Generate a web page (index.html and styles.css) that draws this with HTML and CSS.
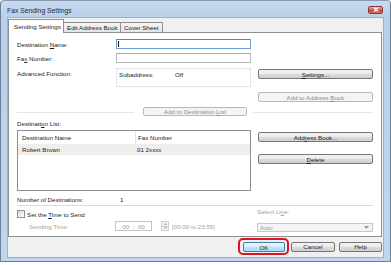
FILE: index.html
```html
<!DOCTYPE html>
<html lang="en">
<head>
    <meta charset="UTF-8">
    <title>Fax Sending Settings</title>
    <link rel="stylesheet" href="styles.css">
</head>
<body>
    <div class="window">
        <div class="titlebar">
            <span class="title">Fax Sending Settings</span>
            <span class="close-btn">
                <svg width="6" height="5" viewBox="0 0 6 5"><path d="M1 0.5 L5 4.5 M5 0.5 L1 4.5" stroke="#fff" stroke-width="1.3"/></svg>
            </span>
        </div>

        <div class="client">
            <div class="tabs">
                <div class="tab active">Sending Settings</div>
                <div class="tab">Edit Address Book</div>
                <div class="tab">Cover Sheet</div>
            </div>

            <div class="panel">
                <div class="row first">
                    <span class="label">Destination <u>N</u>ame:</span>
                    <div class="field focused"><span class="caret"></span></div>
                </div>
                <div class="row">
                    <span class="label">Fa<u>x</u> Number:</span>
                    <div class="field"></div>
                </div>
                <div class="row advanced">
                    <span class="label">Advanced Function:</span>
                    <div class="field info-box">
                        <span class="info-key">Subaddress:</span>
                        <span>Off</span>
                    </div>
                    <button class="btn side settings-btn"><span><u>S</u>ettings...</span></button>
                </div>
                <div class="row right-only">
                    <button class="btn side" disabled><span>Add to Address <u>B</u>ook</span></button>
                </div>
                <div class="row sep-row">
                    <span class="sep short"></span>
                    <button class="btn add-dest" disabled><span>Add to Destination <u>L</u>ist</span></button>
                    <span class="sep"></span>
                </div>

                <div class="dest-section">
                    <div class="dest-left">
                        <span class="label line">Destinati<u>o</u>n List:</span>
                        <div class="list">
                            <div class="list-head">
                                <span class="col-name">Destination Name</span>
                                <span class="col-fax">Fax Number</span>
                            </div>
                            <div class="list-row">
                                <span class="col-name">Robert Brown</span>
                                <span class="col-fax">01 2xxxx</span>
                            </div>
                        </div>
                    </div>
                    <div class="dest-right">
                        <button class="btn side"><span>Add<u>r</u>ess Book...</span></button>
                        <button class="btn side delete-btn"><span><u>D</u>elete</span></button>
                    </div>
                </div>

                <div class="row count-row">
                    <span class="label count-label">Number of Destinations:</span>
                    <span>1</span>
                </div>
                <div class="hr"></div>

                <div class="time-section">
                    <div class="time-left">
                        <div class="check-row">
                            <span class="checkbox"></span>
                            <span>Set the <u>T</u>ime to Send</span>
                        </div>
                        <div class="send-row">
                            <span class="muted send-label">Sending Time:</span>
                            <div class="time-box">00&nbsp;&nbsp;:&nbsp;&nbsp;00</div>
                            <div class="spin">
                                <span class="spin-btn"><svg width="3" height="2" viewBox="0 0 3 2"><path d="M0 2 L1.5 0 L3 2Z" fill="#b0b0b0"/></svg></span>
                                <span class="spin-btn"><svg width="3" height="2" viewBox="0 0 3 2"><path d="M0 0 L1.5 2 L3 0Z" fill="#b0b0b0"/></svg></span>
                            </div>
                            <span class="muted range">[00:00 to 23:59]</span>
                        </div>
                    </div>
                    <div class="time-right">
                        <span class="muted line">Select Li<u>n</u>e:</span>
                        <div class="select">
                            <span>Auto</span>
                            <svg width="5" height="3" viewBox="0 0 5 3"><path d="M0 0 L2.5 3 L5 0Z" fill="#9a9a9a"/></svg>
                        </div>
                    </div>
                </div>
            </div>

            <div class="dialog-buttons">
                <div class="ok-ring">
                    <button class="btn dlg ok">OK</button>
                </div>
                <button class="btn dlg cancel">Cancel</button>
                <button class="btn dlg help">Help</button>
            </div>
        </div>
    </div>
</body>
</html>
```

FILE: styles.css
```css
:root {
    --frame-blue: #bcd3ec;
    --client-gray: #f0f0f0;
    --tab-border: #8d9094;
    --field-border: #b5b8bd;
    --muted: #a3a3a3;
}

* {
    margin: 0;
    padding: 0;
    box-sizing: border-box;
}

body {
    width: 391px;
    height: 265px;
    overflow: hidden;
    background: #ffffff;
    font-family: "Liberation Sans", Arial, sans-serif;
    font-size: 6.2px;
    color: #1b1b1b;
}

u {
    text-decoration: underline;
    text-underline-offset: 1px;
}

/* window frame */
.window {
    width: 391px;
    height: 262px;
    border: 1px solid #6f7f94;
    border-top-color: #8a9ab0;
    border-radius: 4px 4px 0 0;
    background: linear-gradient(#c7daf0, #b9d0ea 17px, #c0d6ee);
    padding: 0 6px 3px 6px;
    display: flex;
    flex-direction: column;
}

.titlebar {
    height: 16px;
    display: flex;
    align-items: center;
    justify-content: space-between;
}

.title {
    font-size: 6.8px;
    color: #1e2a36;
    padding-top: 2px;
}

.close-btn {
    width: 15px;
    height: 8px;
    margin-right: 1px;
    margin-top: 1px;
    border: 1px solid #8a3a3a;
    border-radius: 2px;
    background: linear-gradient(#e9a99c, #d1624f 50%, #c4432f 51%, #d8735c);
    display: flex;
    align-items: center;
    justify-content: center;
}

.client {
    flex: 1;
    background: var(--client-gray);
    border: 1px solid #9cb0c7;
    display: flex;
    flex-direction: column;
}

/* tabs */
.tabs {
    display: flex;
    align-items: flex-end;
    height: 14px;
    padding-top: 1px;
}

.tab {
    height: 10px;
    padding: 0 3px;
    border: 1px solid var(--tab-border);
    border-bottom: none;
    border-left: none;
    background: linear-gradient(#f4f4f4, #e4e4e4);
    display: flex;
    align-items: center;
    white-space: nowrap;
}

.tab.active {
    height: 14px;
    width: 56px;
    padding-left: 5px;
    margin-bottom: -1px;
    border-left: 1px solid var(--tab-border);
    background: #ffffff;
    position: relative;
    z-index: 1;
}

.tabs .tab:nth-child(2) {
    width: 57px;
}

.tabs .tab:nth-child(3) {
    width: 42px;
}

.panel {
    height: 205px;
    margin-right: 1px;
    background: #ffffff;
    border: 1px solid var(--tab-border);
    padding: 0 8px;
}

/* rows */
.row {
    display: flex;
    align-items: center;
    height: 10px;
    margin-top: 4px;
}

.row.first {
    margin-top: 6px;
}

.label {
    width: 99px;
    flex-shrink: 0;
}

.field {
    width: 135px;
    height: 10px;
    border: 1px solid var(--field-border);
    border-top-color: #a6a9ae;
    background: #ffffff;
}

.field.focused {
    border-color: #6a9fd0;
    border-top-color: #4f86bb;
    display: flex;
    align-items: center;
    padding-left: 1px;
}

.caret {
    width: 1px;
    height: 6px;
    background: #222;
}

.row.advanced {
    height: 19px;
    margin-top: 5px;
    align-items: flex-start;
}

.row.advanced .label {
    padding-top: 2px;
}

.info-box {
    height: 19px;
    display: flex;
    padding: 2px 0 0 2px;
    border-color: #e1e3e6;
}

.info-key {
    width: 56px;
}

.btn {
    font-family: inherit;
    font-size: 6.2px;
    color: #1b1b1b;
    height: 10px;
    border: 1px solid #767676;
    border-radius: 2px;
    background: linear-gradient(#f3f3f3, #ebebeb 45%, #dcdcdc 50%, #cfcfcf);
    display: flex;
    align-items: center;
    justify-content: center;
    white-space: nowrap;
}

.btn:disabled {
    color: #8c8c8c;
    border-color: #b6b9bc;
    background: #f4f4f4;
}

.btn.side {
    width: 115px;
    flex-shrink: 0;
}

.settings-btn {
    margin-left: 7px;
    margin-top: 1px;
}

.row.right-only {
    margin-top: 5px;
    justify-content: flex-end;
}

.row.sep-row {
    height: 9px;
    margin-top: 5px;
}

.sep {
    flex: 1;
    height: 1px;
    background: #a0a0a0;
    border-bottom: 1px solid #ffffff;
    box-shadow: 0 1px 0 #e6e6e6;
}

.sep.short {
    flex: none;
    width: 117px;
}

.add-dest {
    width: 104px;
    height: 9px;
    margin: 0 6px 0 9px;
}

/* destination list */
.dest-section {
    display: flex;
    margin-top: 4px;
}

.dest-left {
    width: 234px;
    display: flex;
    flex-direction: column;
}

.line {
    line-height: 8px;
    height: 8px;
}

.list {
    margin-top: 2px;
    height: 61px;
    border: 1px solid #8c9096;
    background: #ffffff;
}

.list-head,
.list-row {
    display: flex;
    align-items: center;
}

.list-head {
    height: 13px;
}

.list-row {
    height: 11px;
    background: #eeeeee;
}

.col-name {
    width: 118px;
    padding-left: 4px;
}

.list-head .col-name {
    border-right: 1px solid #e3e3e3;
    height: 13px;
    display: flex;
    align-items: center;
}

.col-fax {
    padding-left: 1px;
}

.list-head .col-fax {
    padding-left: 2px;
}

.dest-right {
    margin-left: 7px;
    padding-top: 12px;
    display: flex;
    flex-direction: column;
}

.delete-btn {
    margin-top: 12px;
}

.row.count-row {
    height: 8px;
    margin-top: 4px;
}

.count-label {
    width: 103px;
}

.hr {
    height: 1px;
    margin-top: 2px;
    background: #dadada;
}

/* time to send */
.time-section {
    display: flex;
    justify-content: space-between;
}

.time-left {
    display: flex;
    flex-direction: column;
}

.check-row {
    display: flex;
    align-items: center;
    height: 10px;
    margin-top: 3px;
    gap: 2px;
}

.checkbox {
    width: 8px;
    height: 8px;
    border: 1px solid #8e8f8f;
    background: linear-gradient(135deg, #dcdcdc, #fbfbfb);
}

.send-row {
    display: flex;
    align-items: center;
    height: 10px;
    margin-top: 2px;
}

.muted {
    color: var(--muted);
}

.send-label {
    width: 98px;
    padding-left: 12px;
    flex-shrink: 0;
}

.time-box {
    width: 37px;
    height: 10px;
    border: 1px solid #c4c4c4;
    color: #9a9a9a;
    display: flex;
    align-items: center;
    justify-content: center;
}

.spin {
    width: 8px;
    height: 10px;
    margin-left: 9px;
    display: flex;
    flex-direction: column;
}

.spin-btn {
    flex: 1;
    border: 1px solid #cfcfcf;
    background: #f2f2f2;
    display: flex;
    align-items: center;
    justify-content: center;
}

.spin-btn + .spin-btn {
    border-top: none;
}

.range {
    margin-left: 3px;
}

.time-right {
    width: 116px;
    display: flex;
    flex-direction: column;
    padding-top: 2px;
}

.select {
    height: 9px;
    margin-top: 7px;
    border: 1px solid #c8c8c8;
    background: #f4f4f4;
    color: #9a9a9a;
    display: flex;
    align-items: center;
    justify-content: space-between;
    padding: 0 3px 0 2px;
}

/* dialog buttons */
.dialog-buttons {
    display: flex;
    align-items: center;
    justify-content: flex-end;
    margin-top: 1px;
    margin-right: 1px;
}

.ok-ring {
    border: 2px solid #e0141c;
    border-radius: 5px;
    padding: 2px 2px 1px 3px;
}

.btn.dlg {
    height: 10px;
}

.ok {
    width: 42px;
    border-color: #3c7fb1;
    background: linear-gradient(#eaf6fd, #d9f0fc 45%, #bee6fd 50%, #a7d9f5);
}

.cancel {
    width: 44px;
    margin-left: 2px;
}

.help {
    width: 43px;
    margin-left: 4px;
}
```
